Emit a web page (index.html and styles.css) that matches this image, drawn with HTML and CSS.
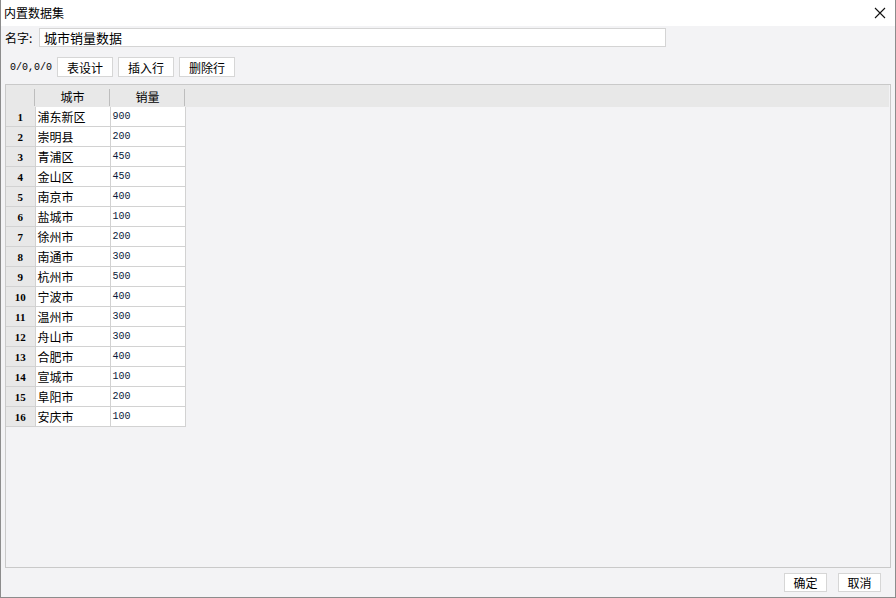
FILE: index.html
```html
<!DOCTYPE html>
<html lang="zh-CN">
<head>
 <meta charset="UTF-8">
 <title>内置数据集</title>
 <link rel="stylesheet" href="styles.css">
</head>
<body>
<div class="window">
 <div class="titlebar">
  <span class="title">内置数据集</span>
  <svg class="close" width="12" height="12" viewBox="0 0 12 12"><path d="M1 1L11 11M11 1L1 11" stroke="#111" stroke-width="1.1" fill="none"/></svg>
 </div>
 <div class="namerow">
  <label>名字:</label>
  <div class="namebox">城市销量数据</div>
 </div>
 <div class="toolbar">
  <span class="pos">0/0,0/0</span>
  <button type="button">表设计</button>
  <button type="button">插入行</button>
  <button type="button">删除行</button>
 </div>
 <div class="grid">
  <table>
   <thead>
    <tr><th class="rn"></th><th>城市</th><th>销量</th><th class="fill"></th></tr>
   </thead>
   <tbody>
    <tr><td class="rn">1</td><td>浦东新区</td><td class="num">900</td></tr>
    <tr><td class="rn">2</td><td>崇明县</td><td class="num">200</td></tr>
    <tr><td class="rn">3</td><td>青浦区</td><td class="num">450</td></tr>
    <tr><td class="rn">4</td><td>金山区</td><td class="num">450</td></tr>
    <tr><td class="rn">5</td><td>南京市</td><td class="num">400</td></tr>
    <tr><td class="rn">6</td><td>盐城市</td><td class="num">100</td></tr>
    <tr><td class="rn">7</td><td>徐州市</td><td class="num">200</td></tr>
    <tr><td class="rn">8</td><td>南通市</td><td class="num">300</td></tr>
    <tr><td class="rn">9</td><td>杭州市</td><td class="num">500</td></tr>
    <tr><td class="rn">10</td><td>宁波市</td><td class="num">400</td></tr>
    <tr><td class="rn">11</td><td>温州市</td><td class="num">300</td></tr>
    <tr><td class="rn">12</td><td>舟山市</td><td class="num">300</td></tr>
    <tr><td class="rn">13</td><td>合肥市</td><td class="num">400</td></tr>
    <tr><td class="rn">14</td><td>宣城市</td><td class="num">100</td></tr>
    <tr><td class="rn">15</td><td>阜阳市</td><td class="num">200</td></tr>
    <tr><td class="rn">16</td><td>安庆市</td><td class="num">100</td></tr>
   </tbody>
  </table>
 </div>
 <div class="footer">
  <button type="button">确定</button>
  <button type="button">取消</button>
 </div>
</div>
</body>
</html>
```

FILE: styles.css
```css
html, body{
  margin: 0;
  padding: 0;
}
body{
  font-family: "Noto Sans CJK SC", "Noto Sans", sans-serif;
  font-size: 12px;
  color: #000;
}
.window{
  width: 896px;
  height: 598px;
  box-sizing: border-box;
  background: #f3f3f5;
  border: 1px solid #8c8c8c;
  border-top: none;
  display: flex;
  flex-direction: column;
}
.titlebar{
  height: 26px;
  background: #fff;
  display: flex;
  align-items: center;
  padding: 0 9px 0 3px;
  flex: none;
}
.title{
  flex: 1;
  line-height: 26px;
}
.close{
  display: block;
}
.namerow{
  display: flex;
  align-items: center;
  height: 19px;
  margin-top: 2px;
  padding-left: 4px;
  flex: none;
}
.namerow label{
  width: 34px;
}
.namebox{
  width: 627px;
  height: 19px;
  box-sizing: border-box;
  border: 1px solid #d4d4d4;
  background: #fff;
  padding-left: 4px;
  line-height: 17px;
  font-size: 13px;
}
.toolbar{
  display: flex;
  align-items: center;
  height: 20px;
  margin-top: 10px;
  padding-left: 9px;
  flex: none;
}
.pos{
  font-family: "Liberation Mono", monospace;
  font-size: 10px;
  width: 47px;
}
button{
  font-family: inherit;
  font-size: 12px;
  background: #fff;
  border: 1px solid #d6d6d6;
  padding: 0;
  height: 20px;
  width: 56px;
  margin-right: 5px;
  color: #000;
}
.grid{
  flex: 1;
  margin: 7px 4px 0 4px;
  border: 1px solid #c9c9c9;
  background: #f3f3f5;
}
table{
  border-collapse: collapse;
  table-layout: fixed;
}
th{
  background: #e8e8e8;
  font-weight: normal;
  height: 22px;
  padding: 0;
  text-align: center;
  width: 75px;
  position: relative;
}
th::after{
  content: "";
  position: absolute;
  right: 0;
  top: 4px;
  bottom: 1px;
  width: 1px;
  background: #bdbdbd;
}
th.rn{
  width: 29px;
}
th.fill{
  width: 704px;
}
th.fill::after{
  display: none;
}
td{
  height: 19px;
  line-height: 18px;
  padding: 0 0 0 2px;
  border: 1px solid #d2d2d2;
  background: #fff;
  white-space: nowrap;
  vertical-align: middle;
}
td.rn{
  background: #e8e8e8;
  text-align: center;
  padding: 0;
  font-family: "Liberation Serif", serif;
  font-weight: bold;
  font-size: 11px;
  border-left: none;
}
tbody tr:first-child td{
  border-top: none;
}
td.num{
  font-family: "Liberation Mono", monospace;
  font-size: 10px;
  color: #0a1a3a;
  padding-top: 1px;
  height: 18px;
  line-height: 16px;
}
.footer{
  display: flex;
  justify-content: flex-end;
  height: 19px;
  margin: 5px 14px 5px 0;
  flex: none;
}
.footer button{
  width: 43px;
  height: 19px;
  margin: 0 0 0 11px;
}
```
